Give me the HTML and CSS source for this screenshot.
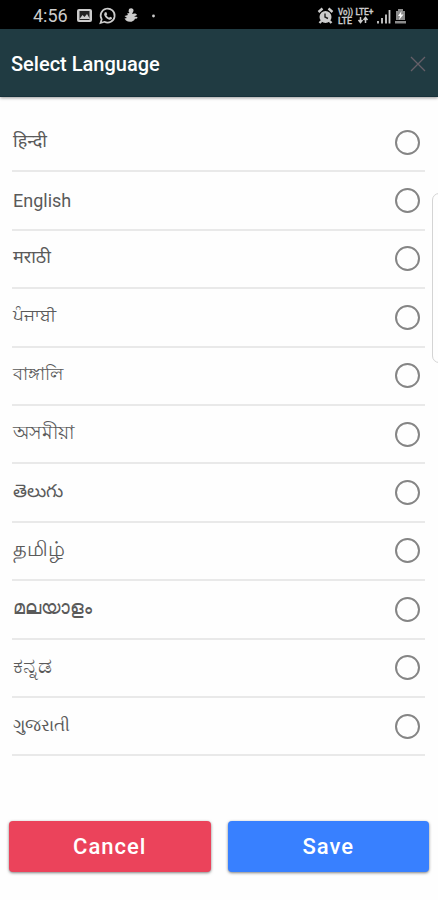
FILE: index.html
```html
<!DOCTYPE html>
<html lang="en">
  <head>
    <meta charset="UTF-8" />
    <meta name="viewport" content="width=device-width, initial-scale=1.0" />
    <title>Select Language</title>
    <link rel="stylesheet" href="styles.css">
  </head>
  <body>
    <div class="status-bar">
      <span class="time">4:56</span>
      <svg class="status-left" width="82" height="20" viewBox="0 0 82 20">
        <rect x="1" y="3" width="15" height="13" rx="2" fill="#ccc" />
        <path d="M3.5 5h10v9h-10z" fill="#222" />
        <path d="M3.5 13l3-4 2 2 2.500-3 3 5z" fill="#ccc" />
        <path d="M24.500 17l1.200-3.700a7 7 0 1 1 2.700 2.500z" fill="none" stroke="#ccc" stroke-width="1.700" />
        <path d="M28.700 6.500l1.500-.4 1 2.200-.8 1c.7 1.200 1.500 2 2.700 2.500l1-1 2 1c-.3 2-2 2.300-3.500 1.700-2.500-1-4.300-3.500-4.500-5z" fill="#ccc" />
        <path d="M53 3c2-1.500 5-.5 4.500 2l-1.500 3c2-1 5-.5 5 1l-3 1.500 3.500.5-.5 1.500-2 .2c-1.500 3.500-6 4-9 1.800l-1.500-2 2.500-.5-2.500-2 3.500-1-1-1.500 2.500-.5-1-1.500z" fill="#ccc" />
        <circle cx="77.500" cy="10" r="1.400" fill="#ccc" />
      </svg>
      <svg class="status-right" width="92" height="20" viewBox="0 0 92 20">
        <circle cx="8.500" cy="11" r="6" fill="#ccc" />
        <path d="M1.500 6l4-3.500M15.500 6l-4-3.500M4.500 15l-2 2M12.500 15l2 2" stroke="#ccc" stroke-width="2.400" />
        <path d="M8 7.500V11l3 1.500" fill="none" stroke="#222" stroke-width="1.400" />
        <g fill="#ccc" stroke="#ccc" stroke-width=".3" font-family="Roboto, sans-serif" font-weight="500" font-size="9">
          <text x="21" y="9" textLength="15" lengthAdjust="spacingAndGlyphs">Vo))</text>
          <text x="21" y="17.500" textLength="14" lengthAdjust="spacingAndGlyphs">LTE</text>
          <text x="38.500" y="9" textLength="18" lengthAdjust="spacingAndGlyphs">LTE+</text>
        </g>
        <path d="M43.500 11v5M41.500 14l2 2.500 2-2.500M48.500 17v-5M46.500 14l2-2.500 2 2.500" fill="none" stroke="#ccc" stroke-width="1.500" />
        <path d="M61 15v2.500M65 12v5.500M69 8.500v9M72.500 4v13.500" stroke="#ccc" stroke-width="1.800" />
        <path d="M79 5h2V3h5v2h2v9h-9zM78 15h11v2.500H78z" fill="#8c8c8c" />
        <path d="M84.500 5l-3.500 5h2l-1 4 4.500-5.500H84z" fill="#fff" />
      </svg>
    </div>

    <div class="header">
      <h1>Select Language</h1>
      <svg class="close" width="16" height="16" viewBox="0 0 16 16">
        <path d="M1 1l14 14M15 1L1 15" stroke="#665f68" stroke-width="1.300" />
      </svg>
    </div>

    <div class="languages">
      <label class="row"><span class="hindi" lang="hi">हिन्दी</span><input type="radio" name="language"></label>
      <label class="row"><span class="english">English</span><input type="radio" name="language"></label>
      <label class="row"><span class="marathi" lang="mr">मराठी</span><input type="radio" name="language"></label>
      <label class="row"><span class="punjabi" lang="pa">ਪੰਜਾਬੀ</span><input type="radio" name="language"></label>
      <label class="row"><span class="bengali" lang="bn">বাঙ্গালি</span><input type="radio" name="language"></label>
      <label class="row"><span class="assamese" lang="as">অসমীয়া</span><input type="radio" name="language"></label>
      <label class="row"><span class="telugu" lang="te">తెలుగు</span><input type="radio" name="language"></label>
      <label class="row"><span class="tamil" lang="ta">தமிழ்</span><input type="radio" name="language"></label>
      <label class="row"><span class="malayalam" lang="ml">മലയാളം</span><input type="radio" name="language"></label>
      <label class="row"><span class="kannada" lang="kn">ಕನ್ನಡ</span><input type="radio" name="language"></label>
      <label class="row"><span class="gujarati" lang="gu">ગુજરાતી</span><input type="radio" name="language"></label>
    </div>

    <div class="buttons">
      <button class="cancel">Cancel</button>
      <button class="save">Save</button>
    </div>

    <!-- edge panel handle -->
    <div class="edge-handle"></div>
  </body>
</html>
```

FILE: styles.css
```css
* {
  box-sizing: border-box;
}

body {
  position: relative;
  height: 900px;
  margin: 0;
  overflow: hidden;
  background-color: #fefefe;
  font-family: Roboto, "Noto Sans", sans-serif;
}

.status-bar {
  display: flex;
  align-items: center;
  height: 29px;
  padding: 2px 29px 0 33px;
  background-color: #000;
}

.time {
  width: 43px;
  color: #ccc;
  font-size: 18px;
}

.status-right {
  margin-left: auto;
}

.header {
  display: flex;
  align-items: center;
  justify-content: space-between;
  height: 68px;
  padding: 2px 12px 0 11px;
  background-color: #203b42;
  border-bottom: 1px solid #17313a;
  box-shadow: 0 1px 3px rgba(0, 0, 0, 0.4);
}

h1 {
  margin: 0;
  color: #fff;
  font-size: 20px;
  font-weight: 500;
}

.languages {
  padding: 17px 13px 0 12px;
}

.row {
  display: flex;
  align-items: center;
  justify-content: space-between;
  height: 58.4px;
  padding: 0 5px 0 1px;
  border-bottom: 2px solid #e9e9e9;
  color: #5a5a5a;
  font-size: 18px;
  line-height: 24px;
}

.row span {
  padding-bottom: 3px;
}

.row input {
  appearance: none;
  width: 25px;
  height: 25px;
  margin: 0;
  border: 2px solid #858585;
  border-radius: 50%;
}

.row .english {
  padding-bottom: 0;
}

.punjabi {
  font-size: 16.5px;
}

.assamese {
  font-size: 18.5px;
}

.tamil {
  font-size: 20.5px;
}

.malayalam {
  font-size: 19px;
}

.kannada {
  font-size: 21.5px;
}

.gujarati {
  font-size: 17px;
}

.buttons {
  display: flex;
  gap: 17px;
  padding: 65px 9px 0;
}

button {
  flex: 1;
  height: 51px;
  padding: 0 0 1px;
  border: none;
  border-radius: 4px;
  color: #fff;
  font-family: Roboto, sans-serif;
  font-size: 22px;
  font-weight: 500;
  letter-spacing: 1px;
  box-shadow: 0 1px 3px rgba(0, 0, 0, 0.5);
}

.cancel {
  background-color: #eb435b;
}

.save {
  background-color: #3880ff;
}

.edge-handle {
  position: absolute;
  top: 193px;
  right: -8px;
  width: 14px;
  height: 170px;
  border: 1px solid #d4d4d4;
  border-radius: 8px;
  background-color: #fefefe;
}
```
